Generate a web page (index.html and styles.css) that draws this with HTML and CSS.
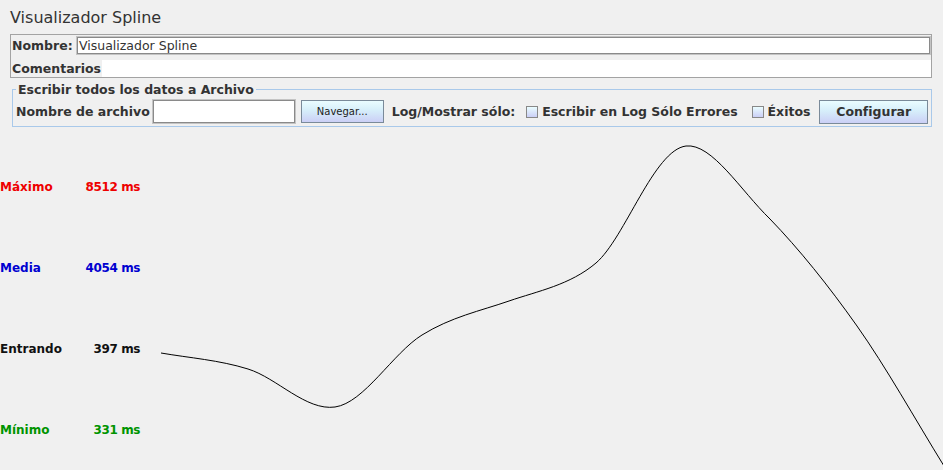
FILE: index.html
```html
<!DOCTYPE html>
<html lang="es">
<head>
<meta charset="utf-8">
<title>Visualizador Spline</title>
<link rel="stylesheet" href="styles.css">
</head>
<body>
<div class="page">
  <h1 class="title">Visualizador Spline</h1>
  <div class="namebox">
    <div class="row name-row">
      <span class="lbl">Nombre:</span>
      <div class="field name-field">Visualizador Spline</div>
    </div>
    <div class="row comment-row">
      <span class="lbl">Comentarios</span>
      <div class="comment-area"></div>
    </div>
  </div>
  <fieldset class="filebox">
    <legend class="legend">Escribir todos los datos a Archivo</legend>
    <div class="file-row">
      <span class="lbl">Nombre de archivo</span>
      <div class="field file-field"></div>
      <div class="btn btn-small">Navegar...</div>
      <span class="lbl log-lbl">Log/Mostrar sólo:</span>
      <span class="check"></span>
      <span class="lbl">Escribir en Log Sólo Errores</span>
      <span class="check check2"></span>
      <span class="lbl">Éxitos</span>
      <div class="btn btn-big">Configurar</div>
    </div>
  </fieldset>
  <div class="chart">
    <div class="legend-col">
      <div class="stat max"><span>Máximo</span><span class="val">8512 ms</span></div>
      <div class="stat avg"><span>Media</span><span class="val">4054 ms</span></div>
      <div class="stat cur"><span>Entrando</span><span class="val">397 ms</span></div>
      <div class="stat min"><span>Mínimo</span><span class="val">331 ms</span></div>
    </div>
    <svg class="plot" viewBox="150 130 793 340" width="793" height="340" xmlns="http://www.w3.org/2000/svg">
      <path d="M161,352 C190,357 219,359 248,368 C277,377 306,410 335,406 C364,402 393,352 422,334 C451,316 480,310 509,300 C538,290 570,284 596,262 C625,237 654,149 686,145 C712,142 741,190 770,218 C799,248 828,284 857,325 C886,366 915,418 944,465" fill="none" stroke="#000" stroke-width="1"/>
    </svg>
  </div>
</div>
</body>
</html>
```
FILE: styles.css
```css
html, body {
  margin: 0;
  padding: 0;
  background: #f0f0f0;
}
.page {
  width: 943px;
  height: 470px;
  overflow: hidden;
  font-family: "DejaVu Sans", sans-serif;
  color: #333;
}
.title {
  margin: 0;
  padding: 8px 0 0 10px;
  height: 26px;
  font-size: 16px;
  font-weight: normal;
  line-height: 20px;
  color: #333;
}
.namebox {
  margin-left: 10px;
  width: 920px;
  border: 1px solid #a3a3a3;
  display: flex;
  flex-direction: column;
  gap: 5px;
}
.row {
  display: flex;
  align-items: center;
}
.lbl {
  font-size: 12.5px;
  font-weight: bold;
  color: #333;
  white-space: nowrap;
}
.name-row {
  height: 19px;
  padding: 1px 0 0 1px;
}
.name-row .lbl {
  width: 65px;
}
.field {
  background: #fff;
  border: 1px solid #8a8a8a;
  box-shadow: 0 0 0 1px #c4c4c4;
  box-sizing: border-box;
}
.name-field {
  flex: 1;
  height: 17px;
  margin-right: 1px;
  font-size: 12.5px;
  line-height: 15px;
  padding-left: 1px;
  color: #333;
}
.comment-row {
  height: 17px;
  padding-left: 1px;
}
.comment-area {
  flex: 1;
  align-self: stretch;
  background: #fff;
  margin-left: 1px;
}
.filebox {
  margin: 4px 0 0 12px;
  width: 920px;
  box-sizing: border-box;
  border: 1px solid #a9c9ea;
  padding: 2px 3px 2px;
  min-width: 0;
}
.legend {
  padding: 0 2px;
  font-size: 12.5px;
  font-weight: bold;
  line-height: 15px;
  color: #333;
}
.file-row {
  display: flex;
  align-items: center;
  height: 25px;
}
.file-field {
  width: 144px;
  height: 23px;
  margin-left: 3px;
}
.btn {
  box-sizing: border-box;
  border: 1px solid #7a8a99;
  background: linear-gradient(#eafdff, #d6eefa 45%, #cbcff6);
  display: flex;
  align-items: center;
  justify-content: center;
  color: #222;
}
.btn-small {
  width: 84px;
  height: 23px;
  margin-left: 6px;
  font-size: 10px;
}
.btn-big {
  width: 110px;
  height: 24px;
  margin-left: 9px;
  font-size: 12.5px;
  font-weight: bold;
  color: #333;
}
.log-lbl {
  margin-left: 8px;
}
.check {
  width: 12px;
  height: 12px;
  box-sizing: border-box;
  border: 1px solid #888;
  background: linear-gradient(#eafdff, #cbcff6);
  margin: 0 4px 0 11px;
}
.check2 {
  margin-left: 14px;
}
.chart {
  display: flex;
  height: 340px;
  margin-top: 4px;
}
.legend-col {
  width: 150px;
  padding-top: 15px;
  display: flex;
  flex-direction: column;
}
.stat {
  height: 81px;
  width: 140px;
  display: flex;
  align-items: center;
  justify-content: space-between;
  font-size: 12px;
  font-weight: bold;
}
.max { color: #ee0000; }
.avg { color: #0000d0; }
.cur { color: #111; }
.min { color: #009400; }
.val {
  text-align: right;
  letter-spacing: -0.4px;
}
.plot {
  display: block;
  flex: none;
}
```
